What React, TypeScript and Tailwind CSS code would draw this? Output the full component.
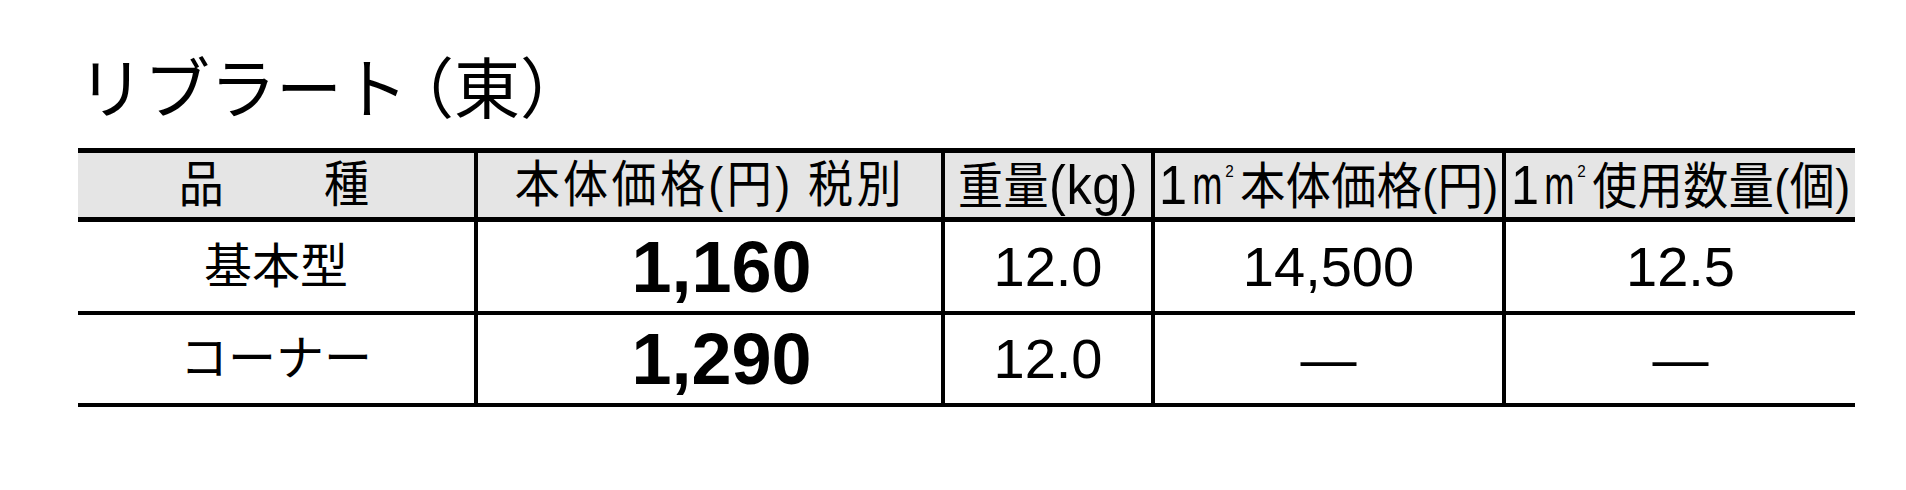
import React from 'react';

const jp = { fontFamily: '"Liberation Sans", "Noto Sans CJK JP", sans-serif' };

// header text in the picture is a squeezed gothic; scale it horizontally
function Head({ children, wide }: { children: React.ReactNode; wide?: boolean }) {
  return (
    <span
      className={`inline-block origin-center scale-x-[0.9] whitespace-nowrap text-[50px] leading-none ${
        wide ? 'tracking-[3.8px]' : 'tracking-[0.6px]'
      }`}
    >
      {children}
    </span>
  );
}

function M2() {
  return (
    <>
      <span className="text-[56px] tracking-normal">1</span>
      <span className="ml-[6px] inline-block origin-left scale-x-[0.72] text-[56px] tracking-normal">m</span>
      <sup className="relative -top-[27px] -ml-[10px] mr-[7px] align-baseline text-[17px] tracking-normal">2</sup>
    </>
  );
}

const headers: React.ReactNode[] = [
  <Head key="a" wide>品　　種</Head>,
  <Head key="b" wide>
    本体価格(円)<span className="ml-[16px]">税別</span>
  </Head>,
  <Head key="c">
    重量<span className="text-[56px]">(kg)</span>
  </Head>,
  <Head key="d">
    <M2 />本体価格(円)
  </Head>,
  <Head key="e">
    <M2 />使用数量(個)
  </Head>,
];

const rows = [
  { name: '基本型', price: '1,160', weight: '12.0', perM2: '14,500', qty: '12.5' },
  { name: 'コーナー', price: '1,290', weight: '12.0', perM2: '—', qty: '—' },
];

const cols = 'grid grid-cols-[400px_467px_210px_351px_349px]';

export default function App() {
  return (
    <div className="h-[490px] w-[1906px] bg-white pl-[78px] pt-[42px] text-black" style={jp}>
      <h1 className="h-[106px] text-[66px] font-normal leading-[96px]">
        リブラー<span className="tracking-[-20px]">ト</span>（東）
      </h1>

      <div className="w-[1777px] border-t-[5px] border-black">
        <div className={`${cols} h-[69px] border-b-[5px] border-black bg-[#e5e5e5]`}>
          {headers.map((h, i) => (
            <div
              key={i}
              className={`flex items-center justify-center ${i < 4 ? 'border-r-4 border-black' : ''}`}
            >
              {h}
            </div>
          ))}
        </div>

        {rows.map((r, idx) => (
          <div
            key={r.name}
            className={`${cols} ${idx === 0 ? 'h-[93px]' : 'h-[92px]'} border-b-4 border-black`}
          >
            <div className="flex items-center justify-center border-r-4 border-black text-[48px] leading-none">
              {r.name}
            </div>
            <div className="flex items-center justify-center border-r-4 border-black pl-6 text-[72px] font-bold leading-none">
              {r.price}
            </div>
            <div className="flex items-center justify-center border-r-4 border-black text-[56px] leading-none">
              {r.weight}
            </div>
            <div className="flex items-center justify-center border-r-4 border-black text-[56px] leading-none">
              {r.perM2}
            </div>
            <div className="flex items-center justify-center text-[56px] leading-none">{r.qty}</div>
          </div>
        ))}
      </div>
    </div>
  );
}
